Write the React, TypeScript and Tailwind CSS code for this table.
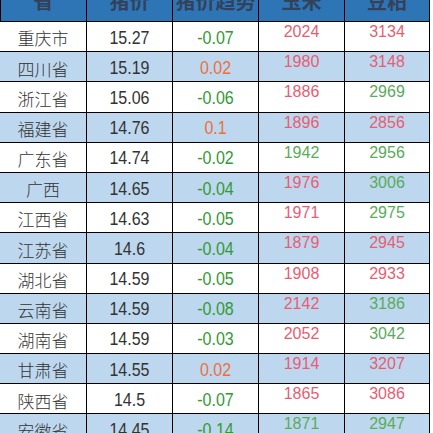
import React from "react";

type Row = {
  name: string;
  price: string;
  change: string;
  corn: string;
  cornUp: boolean;
  soy: string;
  soyUp: boolean;
};

const rows: Row[] = [
  { name: "重庆市", price: "15.27", change: "-0.07", corn: "2024", cornUp: true, soy: "3134", soyUp: true },
  { name: "四川省", price: "15.19", change: "0.02", corn: "1980", cornUp: true, soy: "3148", soyUp: true },
  { name: "浙江省", price: "15.06", change: "-0.06", corn: "1886", cornUp: true, soy: "2969", soyUp: false },
  { name: "福建省", price: "14.76", change: "0.1", corn: "1896", cornUp: true, soy: "2856", soyUp: true },
  { name: "广东省", price: "14.74", change: "-0.02", corn: "1942", cornUp: false, soy: "2956", soyUp: false },
  { name: "广西", price: "14.65", change: "-0.04", corn: "1976", cornUp: true, soy: "3006", soyUp: false },
  { name: "江西省", price: "14.63", change: "-0.05", corn: "1971", cornUp: true, soy: "2975", soyUp: false },
  { name: "江苏省", price: "14.6", change: "-0.04", corn: "1879", cornUp: true, soy: "2945", soyUp: true },
  { name: "湖北省", price: "14.59", change: "-0.05", corn: "1908", cornUp: true, soy: "2933", soyUp: true },
  { name: "云南省", price: "14.59", change: "-0.08", corn: "2142", cornUp: true, soy: "3186", soyUp: false },
  { name: "湖南省", price: "14.59", change: "-0.03", corn: "2052", cornUp: true, soy: "3042", soyUp: false },
  { name: "甘肃省", price: "14.55", change: "0.02", corn: "1914", cornUp: true, soy: "3207", soyUp: true },
  { name: "陕西省", price: "14.5", change: "-0.07", corn: "1865", cornUp: true, soy: "3086", soyUp: true },
  { name: "安徽省", price: "14.45", change: "-0.14", corn: "1871", cornUp: false, soy: "2947", soyUp: false },
];

const widths = ["w-[87px]", "w-[86px]", "w-[86px]", "w-[86px]", "w-[85px]"];

export default function App() {
  return (
    <div
      className="w-[433px] h-[433px] overflow-hidden bg-white"
      style={{ fontFamily: '"Liberation Sans", "Noto Sans CJK SC", sans-serif' }}
    >
      <div className="w-[430px] -mt-[19px]">
        {/* header */}
        <div className="flex h-[41px] bg-[#2e75b6] border-b border-black">
          {["省", "猪价", "猪价趋势", "玉米", "豆粕"].map((h, i) => (
            <div
              key={i}
              className={`${widths[i]} flex items-center justify-center border-r border-black text-[20px] leading-[20px] font-bold text-[#33425a] ${i === 0 ? "border-l" : ""}`}
              style={{ fontFamily: '"Noto Sans CJK SC", sans-serif' }}
            >
              {h}
            </div>
          ))}
        </div>
        {rows.map((r, idx) => {
          const bg = idx % 2 === 1 ? "bg-[#bdd7ee]" : "bg-white";
          const changeColor = r.change.startsWith("-") ? "text-[#339933]" : "text-[#ed6f3a]";
          return (
            <div key={idx} className={`flex h-[30.2px] border-b border-black ${bg}`}>
              <div
                className={`${widths[0]} flex items-center justify-center pt-[3px] border-r border-black text-[17px] text-[#333333]`}
                style={{ fontFamily: '"Noto Sans CJK SC", sans-serif', fontWeight: 300 }}
              >
                {r.name}
              </div>
              <div className={`${widths[1]} flex items-center justify-center pt-[2px] border-r border-black text-[16px] text-[#333333]`}>
                <span className="inline-block scale-y-[1.2]">{r.price}</span>
              </div>
              <div className={`${widths[2]} flex items-center justify-center pt-[2px] border-r border-black text-[16px] ${changeColor}`}>
                <span className="inline-block scale-y-[1.2]">{r.change}</span>
              </div>
              <div
                className={`${widths[3]} flex justify-center pt-[1px] border-r border-black text-[16px] leading-[18px] ${r.cornUp ? "text-[#e85d72]" : "text-[#5aab5a]"}`}
              >
                {r.corn}
              </div>
              <div
                className={`${widths[4]} flex justify-center pt-[1px] border-r border-black text-[16px] leading-[18px] ${r.soyUp ? "text-[#e85d72]" : "text-[#5aab5a]"}`}
              >
                {r.soy}
              </div>
            </div>
          );
        })}
      </div>
    </div>
  );
}
